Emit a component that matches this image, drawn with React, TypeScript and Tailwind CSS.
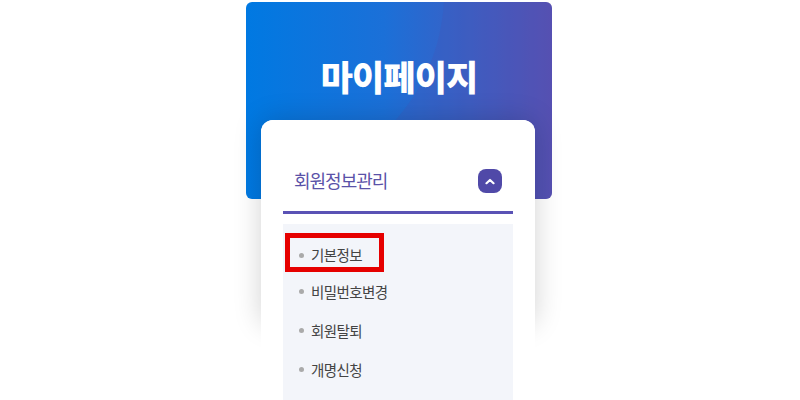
export default function App() {
  const menu = ["기본정보", "비밀번호변경", "회원탈퇴", "개명신청"];

  return (
    <main className="h-[400px] overflow-hidden bg-white pt-[2px] font-['Noto_Sans_CJK_KR','Noto_Sans',sans-serif]">
      <div className="ml-[246px] w-[306px]">
        {/* Title banner */}
        <section className="relative h-[197px] overflow-hidden rounded-[6px] bg-[linear-gradient(90deg,#0079e2_0%,#1b70d8_45%,#5a50b2_100%)] pt-[51px] text-center">
          <svg className="absolute inset-0" width="306" height="197" viewBox="0 0 306 197">
            <path d="M198 0C195 45 178 88 146 122C125 145 100 175 84 197H306V0Z" fill="#4a50b0" fillOpacity="0.22" />
          </svg>
          <h1 className="relative text-[35px] leading-[46px] font-black tracking-[-0.9px] text-white">마이페이지</h1>
        </section>

        {/* Menu card */}
        <section className="relative z-10 -mt-[79px] ml-[15px] h-[290px] w-[274px] rounded-t-[12px] bg-white px-[22px] pt-[40px]">
          <div className="absolute inset-x-0 top-0 -z-10 h-[205px] rounded-[12px] shadow-[0_0_28px_rgba(0,0,0,0.18)]" />
          <div className="absolute inset-0 -z-10 rounded-t-[12px] bg-white" />
          <div className="flex h-[54px] items-start justify-between border-b-[3px] border-[#5a52b5] pr-[11px] pl-[11px]">
            <span className="pt-[6px] text-[18px] leading-[28px] tracking-[-1px] text-[#5a52a8]">회원정보관리</span>
            <button className="mt-[9px] flex h-[24px] w-[24px] items-center justify-center rounded-[8px] bg-[#5049a8]">
              <svg width="10" height="7" viewBox="0 0 10 7" fill="none">
                <path d="M1.5 5.2 5 2l3.5 3.2" stroke="#fff" strokeWidth="2.2" strokeLinecap="round" strokeLinejoin="round" />
              </svg>
            </button>
          </div>

          <ul className="mt-[10px] h-[200px] bg-[#f3f5fa] pt-[14px] pl-[16px]">
            {menu.map((item, i) => (
              <li
                key={item}
                className={
                  i === 0
                    ? "relative flex h-[34px] items-center gap-[7px] text-[14.5px] tracking-[-0.6px] text-[#444]"
                    : "relative flex h-[39px] items-center gap-[7px] text-[14.5px] tracking-[-0.6px] text-[#444]"
                }
              >
                <span className="h-[5px] w-[5px] rounded-full bg-[#aaa]" />
                {item}
                {i === 0 && (
                  <span className="absolute top-[-5px] left-[-14px] h-[39px] w-[99px] border-[5px] border-[#e60000]" />
                )}
              </li>
            ))}
          </ul>
        </section>
      </div>
    </main>
  );
}
